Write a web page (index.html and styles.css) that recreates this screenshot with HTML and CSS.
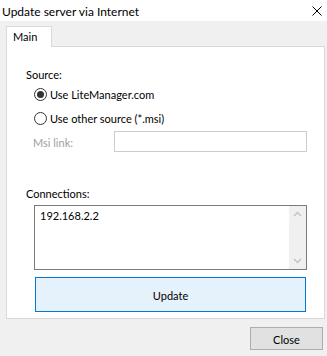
FILE: index.html
```html
<!DOCTYPE html>
<html>
<head>
<meta charset="utf-8">
<link rel="stylesheet" href="styles.css">
</head>
<body>
<div class="window">
  <div class="titlebar">
    <span class="title">Update server via Internet</span>
    <svg class="close-x" width="10" height="10" viewBox="0 0 10 10"><path d="M0.5 0.5 L9.5 9.5 M9.5 0.5 L0.5 9.5" stroke="#000" stroke-width="1" fill="none"/></svg>
  </div>
  <div class="body">
    <div class="tabs"><div class="tab">Main</div></div>
    <div class="panel">
      <div class="label source">Source:</div>
      <div class="radio-row"><span class="radio checked"></span><span>Use LiteManager.com</span></div>
      <div class="radio-row"><span class="radio"></span><span>Use other source (*.msi)</span></div>
      <div class="msi-row"><span class="msi-label">Msi link:</span><div class="textbox"></div></div>
      <div class="label connections">Connections:</div>
      <div class="textarea">
        <div class="ta-text">192.168.2.2</div>
        <div class="vscroll">
          <svg class="arrow" width="17" height="17" viewBox="0 0 17 17"><path d="M5 10 L8.5 6.5 L12 10" stroke="#c2c2c2" stroke-width="1.4" fill="none"/></svg>
          <svg class="arrow" width="17" height="17" viewBox="0 0 17 17"><path d="M5 7 L8.5 10.5 L12 7" stroke="#c2c2c2" stroke-width="1.4" fill="none"/></svg>
        </div>
      </div>
      <button class="update">Update</button>
    </div>
    <div class="footer"><button class="close">Close</button></div>
  </div>
</div>
</body>
</html>
```
FILE: styles.css
```css
* { box-sizing: border-box; }
html, body { margin: 0; padding: 0; }
body {
  width: 327px;
  height: 356px;
  overflow: hidden;
  background: #f0f0f0;
  font-family: Lato, "Noto Sans", sans-serif;
  font-size: 11px;
  color: #000;
}
.window { width: 327px; height: 356px; display: flex; flex-direction: column; }
.titlebar {
  height: 21px;
  background: #fff;
  display: flex;
  align-items: center;
  justify-content: space-between;
  padding: 0 5px 0 2px;
  line-height: 21px;
}
.title { font-size: 12px; padding-top: 1px; }
.close-x { margin-top: 1px; }
.body { padding: 5px 2px 0 6px; display: flex; flex-direction: column; }
.tabs { display: flex; height: 20px; }
.tab {
  width: 46px;
  height: 21px;
  background: #fff;
  border: 1px solid #d9d9d9;
  border-bottom: none;
  padding: 1px 0 0 6px;
  line-height: 18px;
  position: relative;
  z-index: 1;
}
.panel {
  height: 273px;
  background: #fff;
  border: 1px solid #d9d9d9;
  padding: 19px 0 0 19px;
  display: flex;
  flex-direction: column;
  align-items: flex-start;
}
.label { line-height: 16px; height: 16px; padding-top: 1px; }
.radio-row {
  height: 24px;
  display: flex;
  align-items: center;
  margin-left: 8px;
  padding-top: 1px;
}
.radio {
  width: 13px;
  height: 13px;
  border: 1px solid #333;
  border-radius: 50%;
  margin-right: 3px;
  display: flex;
  align-items: center;
  justify-content: center;
  background: #fff;
}
.radio.checked::after {
  content: "";
  width: 7px;
  height: 7px;
  border-radius: 50%;
  background: #333;
}
.msi-row {
  margin-top: 1px;
  display: flex;
  align-items: center;
  height: 21px;
}
.msi-label { color: #a0a0a0; width: 88px; padding-left: 7px; padding-top: 1px; }
.textbox {
  width: 193px;
  height: 21px;
  border: 1px solid #cccccc;
  background: #fff;
}
.connections { margin-top: 33px; }
.textarea {
  margin-top: 4px;
  margin-left: 8px;
  width: 273px;
  height: 65px;
  border: 1px solid #7a7a7a;
  display: flex;
  justify-content: space-between;
}
.ta-text { padding: 2px 0 0 5px; line-height: 16px; }
.vscroll {
  width: 17px;
  height: 100%;
  background: #f0f0f0;
  display: flex;
  flex-direction: column;
  justify-content: space-between;
}
.arrow { display: block; }
.update {
  margin-top: 7px;
  margin-left: 9px;
  width: 271px;
  height: 35px;
  border: 1px solid #0078d7;
  background: #e5f1fb;
  font: inherit;
  color: #000;
  padding: 1px 0 0;
}
.footer { display: flex; justify-content: flex-end; margin-top: 8px; padding-right: 2px; }
.close {
  width: 73px;
  height: 23px;
  border: 1px solid #adadad;
  background: #e1e1e1;
  font: inherit;
  color: #000;
  padding: 1px 0 0;
}
```
